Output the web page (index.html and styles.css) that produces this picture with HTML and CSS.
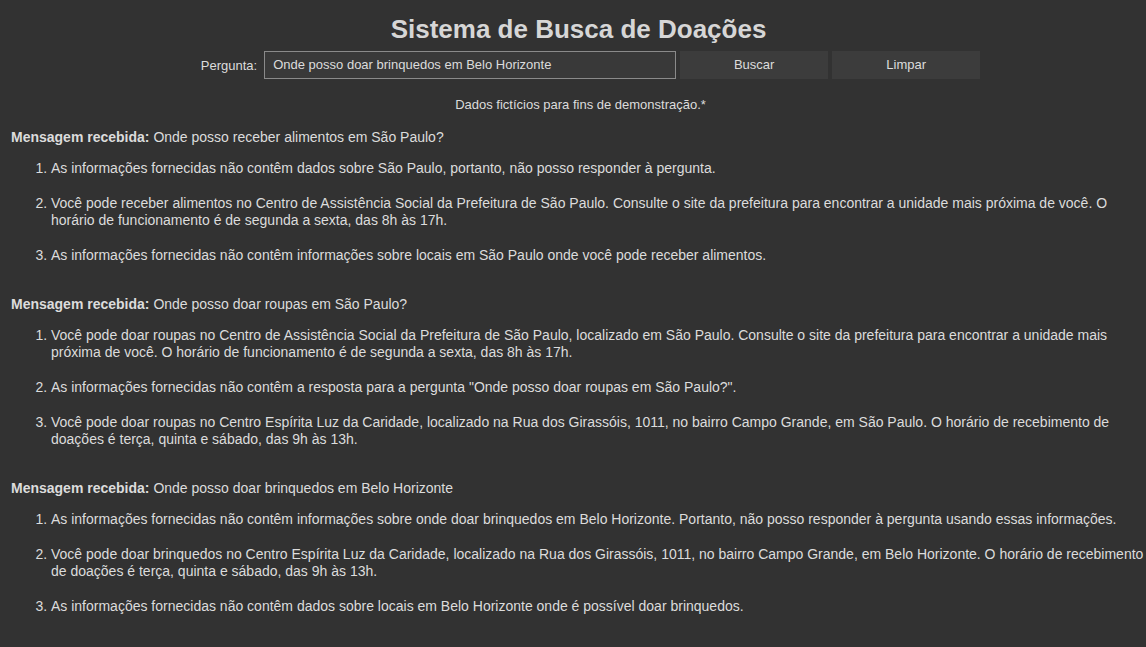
FILE: index.html
```html
<!DOCTYPE html>
<html lang="pt-BR">
<head>
<meta charset="utf-8">
<title>Sistema de Busca de Doações</title>
<link rel="stylesheet" href="styles.css">
</head>
<body>
<div class="page">
  <h1 class="title">Sistema de Busca de Doações</h1>
  <form class="search">
    <label class="search-label" for="q">Pergunta:</label>
    <input class="search-input" id="q" type="text" value="Onde posso doar brinquedos em Belo Horizonte">
    <button class="btn" type="button">Buscar</button>
    <button class="btn" type="button">Limpar</button>
  </form>
  <p class="note">Dados fictícios para fins de demonstração.*</p>

  <section class="msg">
    <p class="msg-head"><strong>Mensagem recebida:</strong> Onde posso receber alimentos em São Paulo?</p>
    <ol class="answers">
      <li>As informações fornecidas não contêm dados sobre São Paulo, portanto, não posso responder à pergunta.</li>
      <li>Você pode receber alimentos no Centro de Assistência Social da Prefeitura de São Paulo. Consulte o site da prefeitura para encontrar a unidade mais próxima de você. O horário de funcionamento é de segunda a sexta, das 8h às 17h.</li>
      <li>As informações fornecidas não contêm informações sobre locais em São Paulo onde você pode receber alimentos.</li>
    </ol>
  </section>

  <section class="msg">
    <p class="msg-head"><strong>Mensagem recebida:</strong> Onde posso doar roupas em São Paulo?</p>
    <ol class="answers">
      <li>Você pode doar roupas no Centro de Assistência Social da Prefeitura de São Paulo, localizado em São Paulo. Consulte o site da prefeitura para encontrar a unidade mais próxima de você. O horário de funcionamento é de segunda a sexta, das 8h às 17h.</li>
      <li>As informações fornecidas não contêm a resposta para a pergunta "Onde posso doar roupas em São Paulo?".</li>
      <li>Você pode doar roupas no Centro Espírita Luz da Caridade, localizado na Rua dos Girassóis, 1011, no bairro Campo Grande, em São Paulo. O horário de recebimento de doações é terça, quinta e sábado, das 9h às 13h.</li>
    </ol>
  </section>

  <section class="msg">
    <p class="msg-head"><strong>Mensagem recebida:</strong> Onde posso doar brinquedos em Belo Horizonte</p>
    <ol class="answers">
      <li>As informações fornecidas não contêm informações sobre onde doar brinquedos em Belo Horizonte. Portanto, não posso responder à pergunta usando essas informações.</li>
      <li>Você pode doar brinquedos no Centro Espírita Luz da Caridade, localizado na Rua dos Girassóis, 1011, no bairro Campo Grande, em Belo Horizonte. O horário de recebimento de doações é terça, quinta e sábado, das 9h às 13h.</li>
      <li>As informações fornecidas não contêm dados sobre locais em Belo Horizonte onde é possível doar brinquedos.</li>
    </ol>
  </section>
</div>
</body>
</html>
```

FILE: styles.css
```css
html, body {
  margin: 0;
  padding: 0;
  background: #323232;
}
body {
  color: #dcdcdc;
  font-family: "Liberation Sans", Arial, sans-serif;
  font-size: 14px;
  line-height: 17px;
}
.page {
  padding: 14px 0 20px 11px;
}
.title {
  margin: 0;
  text-align: center;
  font-size: 26px;
  line-height: 30px;
  font-weight: bold;
  color: #d6d6d6;
}
.search {
  display: flex;
  justify-content: center;
  align-items: center;
  margin: 7px 0 0 0;
  padding-left: 24px;
}
.search-label {
  font-size: 13px;
  margin-right: 7px;
}
.search-input {
  box-sizing: border-box;
  width: 412px;
  height: 28px;
  margin: 0;
  padding: 0 8px 1px;
  background: #393939;
  border: 1px solid #8a8a8a;
  color: #dcdcdc;
  font-family: "Liberation Sans", Arial, sans-serif;
  font-size: 13px;
  outline: none;
}
.btn {
  box-sizing: border-box;
  width: 148px;
  height: 28px;
  margin: 0 0 0 4px;
  padding: 0 0 2px;
  background: #3c3c3c;
  border: none;
  color: #dcdcdc;
  font-family: "Liberation Sans", Arial, sans-serif;
  font-size: 13px;
}
.note {
  margin: 17px 0 0 0;
  padding-left: 4px;
  text-align: center;
  font-size: 13px;
}
.msg {
  margin-top: 16px;
}
.msg + .msg {
  margin-top: 32px;
}
.msg-head {
  margin: 0;
}
.answers {
  margin: 14px 0 0 0;
  padding: 0 0 0 40px;
}
.answers li {
  margin: 0 0 18px 0;
}
.answers li:last-child {
  margin-bottom: 0;
}
```
